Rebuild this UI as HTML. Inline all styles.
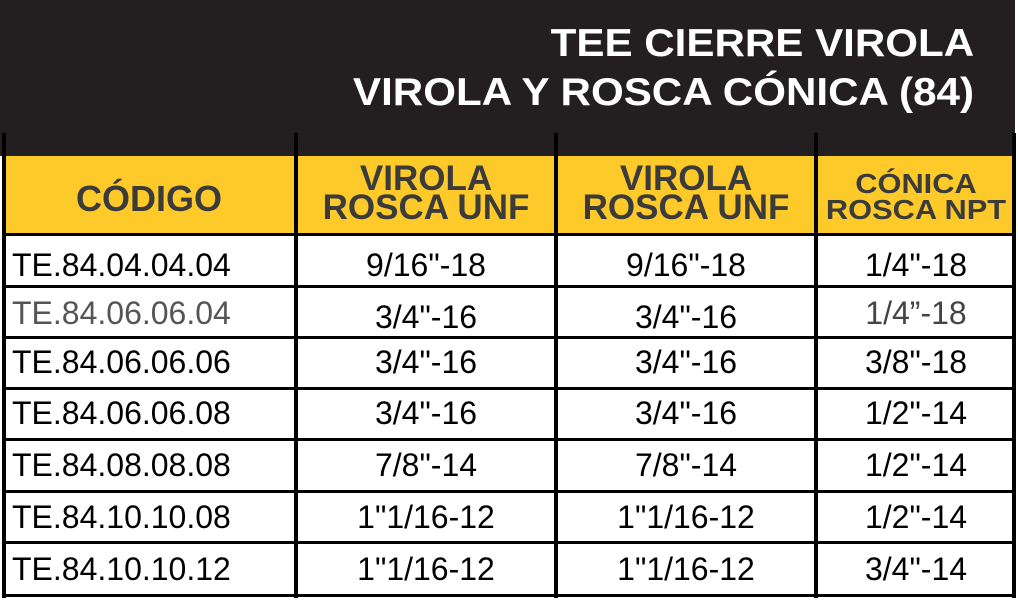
<!DOCTYPE html>
<html><head><meta charset="utf-8"><style>
*{margin:0;padding:0;box-sizing:border-box}
body{width:1018px;height:603px;background:#fff;position:relative;overflow:hidden;font-family:"Liberation Sans",Arial,sans-serif}
.dark{position:absolute;left:0;top:0;width:1015px;height:156px;background:#231f20}
.t{position:absolute;right:44px;color:#fff;font-weight:bold;font-size:39px;white-space:nowrap;transform:scaleX(1.08);transform-origin:right center}
.yel{position:absolute;left:3px;top:156px;width:1012px;height:78px;background:#fdca2a}
.v{position:absolute;top:133px;width:4px;background:#000;height:465px}
.h{position:absolute;left:2px;width:1014px;height:3px;background:#000}
.c{position:absolute;font-size:32px;line-height:32px;color:#000;white-space:nowrap;text-align:center}
.hd{position:absolute;color:#3b3b3b;font-weight:bold;text-align:center;white-space:nowrap}
</style></head><body>
<div class="dark"></div>
<div class="t" style="top:22px">TEE CIERRE VIROLA</div>
<div class="t" style="top:71px">VIROLA Y ROSCA CÓNICA (84)</div>
<div class="yel"></div>
<div class="v" style="left:2px"></div>
<div class="v" style="left:294px"></div>
<div class="v" style="left:554px"></div>
<div class="v" style="left:814px"></div>
<div class="v" style="left:1012px"></div>
<div class="hd" style="left:4px;width:290px;top:178px;font-size:36px">CÓDIGO</div>
<div class="hd" style="left:298px;width:256px;top:164px;font-size:35px;line-height:29px">VIROLA<br>ROSCA UNF</div>
<div class="hd" style="left:558px;width:256px;top:164px;font-size:35px;line-height:29px">VIROLA<br>ROSCA UNF</div>
<div class="hd" style="left:818px;width:196px;top:171px;font-size:28px;line-height:26px;transform:scaleX(1.1)">CÓNICA<br>ROSCA NPT</div>
<div class="h" style="top:233px"></div>
<div class="h" style="top:285px"></div>
<div class="h" style="top:336px"></div>
<div class="h" style="top:387px"></div>
<div class="h" style="top:438px"></div>
<div class="h" style="top:490px"></div>
<div class="h" style="top:541px"></div>
<div class="h" style="top:594px"></div>
<div class="c" style="left:12px;top:249px;text-align:left">TE.84.04.04.04</div><div class="c" style="left:298px;width:256px;top:249px">9/16"-18</div><div class="c" style="left:558px;width:256px;top:249px">9/16"-18</div><div class="c" style="left:818px;width:196px;top:249px">1/4"-18</div>
<div class="c" style="left:12px;top:297px;text-align:left;color:#555">TE.84.06.06.04</div><div class="c" style="left:298px;width:256px;top:301px">3/4"-16</div><div class="c" style="left:558px;width:256px;top:301px">3/4"-16</div><div class="c" style="left:818px;width:196px;top:297px;color:#444">1/4”-18</div>
<div class="c" style="left:12px;top:346px;text-align:left">TE.84.06.06.06</div><div class="c" style="left:298px;width:256px;top:346px">3/4"-16</div><div class="c" style="left:558px;width:256px;top:346px">3/4"-16</div><div class="c" style="left:818px;width:196px;top:346px">3/8"-18</div>
<div class="c" style="left:12px;top:397px;text-align:left">TE.84.06.06.08</div><div class="c" style="left:298px;width:256px;top:397px">3/4"-16</div><div class="c" style="left:558px;width:256px;top:397px">3/4"-16</div><div class="c" style="left:818px;width:196px;top:397px">1/2"-14</div>
<div class="c" style="left:12px;top:449px;text-align:left">TE.84.08.08.08</div><div class="c" style="left:298px;width:256px;top:449px">7/8"-14</div><div class="c" style="left:558px;width:256px;top:449px">7/8"-14</div><div class="c" style="left:818px;width:196px;top:449px">1/2"-14</div>
<div class="c" style="left:12px;top:501px;text-align:left">TE.84.10.10.08</div><div class="c" style="left:298px;width:256px;top:501px">1"1/16-12</div><div class="c" style="left:558px;width:256px;top:501px">1"1/16-12</div><div class="c" style="left:818px;width:196px;top:501px">1/2"-14</div>
<div class="c" style="left:12px;top:553px;text-align:left">TE.84.10.10.12</div><div class="c" style="left:298px;width:256px;top:553px">1"1/16-12</div><div class="c" style="left:558px;width:256px;top:553px">1"1/16-12</div><div class="c" style="left:818px;width:196px;top:553px">3/4"-14</div>
</body></html>
